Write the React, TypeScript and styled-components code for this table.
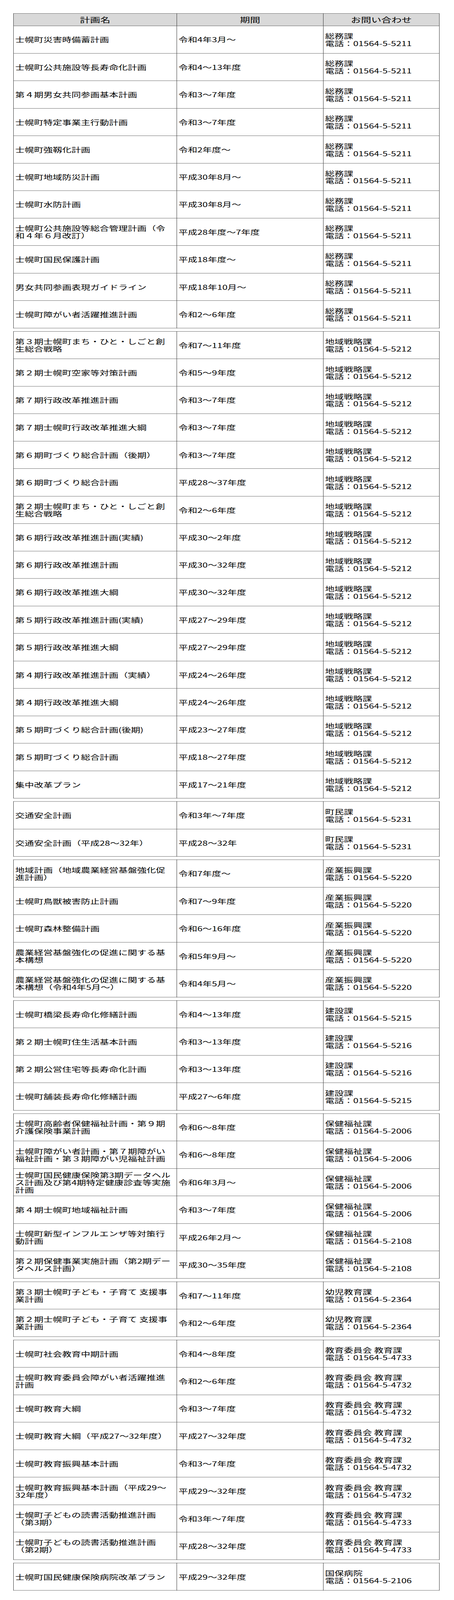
import React from "react";
import styled, { createGlobalStyle } from "styled-components";

const GlobalStyle = createGlobalStyle`
  html, body {
    margin: 0;
    padding: 0;
    background: #ffffff;
  }
  body {
    font-family: "Noto Sans CJK JP", "Noto Sans", sans-serif;
    color: #000000;
  }
`;

type Plan = { name: string; period: string; tel: string };
type Group = { dept: string; plans: Plan[] };

const t = (n: string) => "01564-5-" + n;

const groups: Group[] = [
  {
    dept: "総務課",
    plans: [
      { name: "士幌町災害時備蓄計画", period: "令和4年3月～", tel: t("5211") },
      { name: "士幌町公共施設等長寿命化計画", period: "令和4～13年度", tel: t("5211") },
      { name: "第４期男女共同参画基本計画", period: "令和3～7年度", tel: t("5211") },
      { name: "士幌町特定事業主行動計画", period: "令和3～7年度", tel: t("5211") },
      { name: "士幌町強靱化計画", period: "令和2年度～", tel: t("5211") },
      { name: "士幌町地域防災計画", period: "平成30年8月～", tel: t("5211") },
      { name: "士幌町水防計画", period: "平成30年8月～", tel: t("5211") },
      { name: "士幌町公共施設等総合管理計画（令和４年６月改訂）", period: "平成28年度～7年度", tel: t("5211") },
      { name: "士幌町国民保護計画", period: "平成18年度～", tel: t("5211") },
      { name: "男女共同参画表現ガイドライン", period: "平成18年10月～", tel: t("5211") },
      { name: "士幌町障がい者活躍推進計画", period: "令和2～6年度", tel: t("5211") },
    ],
  },
  {
    dept: "地域戦略課",
    plans: [
      { name: "第３期士幌町まち・ひと・しごと創生総合戦略", period: "令和7～11年度", tel: t("5212") },
      { name: "第２期士幌町空家等対策計画", period: "令和5～9年度", tel: t("5212") },
      { name: "第７期行政改革推進計画", period: "令和3～7年度", tel: t("5212") },
      { name: "第７期士幌町行政改革推進大綱", period: "令和3～7年度", tel: t("5212") },
      { name: "第６期町づくり総合計画（後期）", period: "令和3～7年度", tel: t("5212") },
      { name: "第６期町づくり総合計画", period: "平成28～37年度", tel: t("5212") },
      { name: "第２期士幌町まち・ひと・しごと創生総合戦略", period: "令和2～6年度", tel: t("5212") },
      { name: "第６期行政改革推進計画(実績)", period: "平成30～2年度", tel: t("5212") },
      { name: "第６期行政改革推進計画", period: "平成30～32年度", tel: t("5212") },
      { name: "第６期行政改革推進大綱", period: "平成30～32年度", tel: t("5212") },
      { name: "第５期行政改革推進計画(実績)", period: "平成27～29年度", tel: t("5212") },
      { name: "第５期行政改革推進大綱", period: "平成27～29年度", tel: t("5212") },
      { name: "第４期行政改革推進計画（実績）", period: "平成24～26年度", tel: t("5212") },
      { name: "第４期行政改革推進大綱", period: "平成24～26年度", tel: t("5212") },
      { name: "第５期町づくり総合計画(後期)", period: "平成23～27年度", tel: t("5212") },
      { name: "第５期町づくり総合計画", period: "平成18～27年度", tel: t("5212") },
      { name: "集中改革プラン", period: "平成17～21年度", tel: t("5212") },
    ],
  },
  {
    dept: "町民課",
    plans: [
      { name: "交通安全計画", period: "令和3年～7年度", tel: t("5231") },
      { name: "交通安全計画（平成28～32年）", period: "平成28～32年", tel: t("5231") },
    ],
  },
  {
    dept: "産業振興課",
    plans: [
      { name: "地域計画（地域農業経営基盤強化促進計画）", period: "令和7年度～", tel: t("5220") },
      { name: "士幌町鳥獣被害防止計画", period: "令和7～9年度", tel: t("5220") },
      { name: "士幌町森林整備計画", period: "令和6～16年度", tel: t("5220") },
      { name: "農業経営基盤強化の促進に関する基本構想", period: "令和5年9月～", tel: t("5220") },
      { name: "農業経営基盤強化の促進に関する基本構想（令和4年5月～）", period: "令和4年5月～", tel: t("5220") },
    ],
  },
  {
    dept: "建設課",
    plans: [
      { name: "士幌町橋梁長寿命化修繕計画", period: "令和4～13年度", tel: t("5215") },
      { name: "第２期士幌町住生活基本計画", period: "令和3～13年度", tel: t("5216") },
      { name: "第２期公営住宅等長寿命化計画", period: "令和3～13年度", tel: t("5216") },
      { name: "士幌町舗装長寿命化修繕計画", period: "平成27～6年度", tel: t("5215") },
    ],
  },
  {
    dept: "保健福祉課",
    plans: [
      { name: "士幌町高齢者保健福祉計画・第９期介護保険事業計画", period: "令和6～8年度", tel: t("2006") },
      { name: "士幌町障がい者計画・第７期障がい福祉計画・第３期障がい児福祉計画", period: "令和6～8年度", tel: t("2006") },
      { name: "士幌町国民健康保険第3期データヘルス計画及び第4期特定健康診査等実施計画", period: "令和6年3月～", tel: t("2006") },
      { name: "第４期士幌町地域福祉計画", period: "令和3～7年度", tel: t("2006") },
      { name: "士幌町新型インフルエンザ等対策行動計画", period: "平成26年2月～", tel: t("2108") },
      { name: "第２期保健事業実施計画（第2期データヘルス計画）", period: "平成30～35年度", tel: t("2108") },
    ],
  },
  {
    dept: "幼児教育課",
    plans: [
      { name: "第３期士幌町子ども・子育て 支援事業計画", period: "令和7～11年度", tel: t("2364") },
      { name: "第２期士幌町子ども・子育て 支援事業計画", period: "令和2～6年度", tel: t("2364") },
    ],
  },
  {
    dept: "教育委員会 教育課",
    plans: [
      { name: "士幌町社会教育中期計画", period: "令和4～8年度", tel: t("4733") },
      { name: "士幌町教育委員会障がい者活躍推進計画", period: "令和2～6年度", tel: t("4732") },
      { name: "士幌町教育大綱", period: "令和3～7年度", tel: t("4732") },
      { name: "士幌町教育大綱（平成27～32年度）", period: "平成27～32年度", tel: t("4732") },
      { name: "士幌町教育振興基本計画", period: "令和3～7年度", tel: t("4732") },
      { name: "士幌町教育振興基本計画（平成29～32年度）", period: "平成29～32年度", tel: t("4732") },
      { name: "士幌町子どもの読書活動推進計画（第3期）", period: "令和3年～7年度", tel: t("4733") },
      { name: "士幌町子どもの読書活動推進計画（第2期）", period: "平成28～32年度", tel: t("4733") },
    ],
  },
  {
    dept: "国保病院",
    plans: [{ name: "士幌町国民健康保険病院改革プラン", period: "平成29～32年度", tel: t("2106") }],
  },
];

// the capture window stops at 4096px: the page is laid out at its real
// 5854px height and squeezed vertically so every row stays in the frame
const Frame = styled.div`
  height: 4096px;
  overflow: hidden;
`;

const Page = styled.div`
  padding: 49px 0 33px 34px;
  transform: scaleY(0.6997);
  transform-origin: 0 0;
`;

const PlanTable = styled.table`
  width: 1091px;
  border-collapse: collapse;
  table-layout: fixed;
  & + & {
    margin-top: 11px;
  }
`;

const HeadCell = styled.th`
  height: 44px;
  padding: 0;
  border: 1px solid #333333;
  background: #d9d9d9;
  font-size: 26px;
  font-weight: normal;
  line-height: 30px;
  text-align: center;
  vertical-align: middle;
`;

const Row = styled.tr`
  height: 100.5px;
`;

const Cell = styled.td`
  padding: 0 8px 0 4px;
  border: 1px solid #333333;
  font-size: 24px;
  line-height: 27px;
  text-align: left;
  vertical-align: middle;
`;

const Line = styled.span`
  display: block;
`;

export default function App() {
  return (
    <>
      <GlobalStyle />
      <Frame>
        <Page>
          {groups.map((g, gi) => (
            <PlanTable key={g.dept}>
              <colgroup>
                <col style={{ width: 418 }} />
                <col style={{ width: 375 }} />
                <col style={{ width: 297 }} />
              </colgroup>
              {gi === 0 && (
                <thead>
                  <tr>
                    <HeadCell>計画名</HeadCell>
                    <HeadCell>期間</HeadCell>
                    <HeadCell>お問い合わせ</HeadCell>
                  </tr>
                </thead>
              )}
              <tbody>
                {g.plans.map((p) => (
                  <Row key={p.name}>
                    <Cell>{p.name}</Cell>
                    <Cell>{p.period}</Cell>
                    <Cell>
                      <Line>{g.dept}</Line>
                      <Line>電話：{p.tel}</Line>
                    </Cell>
                  </Row>
                ))}
              </tbody>
            </PlanTable>
          ))}
        </Page>
      </Frame>
    </>
  );
}
